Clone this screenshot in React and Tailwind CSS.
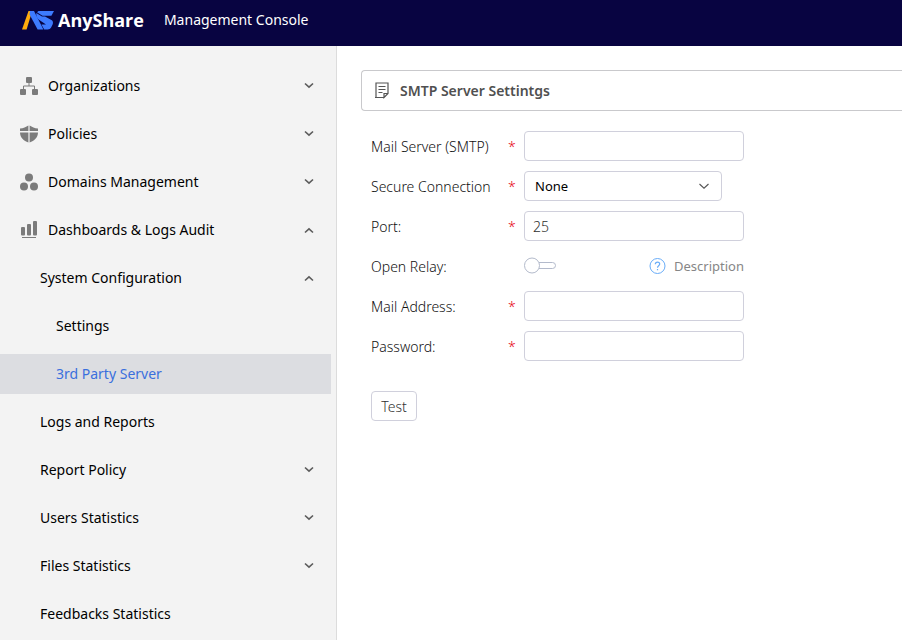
import { useState } from "react";

const menu = [
    { label: "Organizations", icon: OrgIcon, level: 0, arrow: "down" },
    { label: "Policies", icon: ShieldIcon, level: 0, arrow: "down" },
    { label: "Domains Management", icon: DomainsIcon, level: 0, arrow: "down" },
    { label: "Dashboards & Logs Audit", icon: ChartIcon, level: 0, arrow: "up" },
    { label: "System Configuration", level: 1, arrow: "up" },
    { label: "Settings", level: 2 },
    { label: "3rd Party Server", level: 2 },
    { label: "Logs and Reports", level: 1 },
    { label: "Report Policy", level: 1, arrow: "down" },
    { label: "Users Statistics", level: 1, arrow: "down" },
    { label: "Files Statistics", level: 1, arrow: "down" },
    { label: "Feedbacks Statistics", level: 1 },
];

const indent = ["pl-5", "pl-10", "pl-14"];

export default function App() {
    const [active, setActive] = useState("3rd Party Server");

    return (
        <div className="flex h-screen flex-col overflow-hidden bg-white font-['Noto_Sans','Open_Sans',sans-serif] text-sm">
            <header className="flex h-[46px] shrink-0 items-center bg-[#080441] pb-1.5 pl-[22px] text-white">
                <Logo />
                <span className="ml-1 font-['Open_Sans',sans-serif] text-lg font-bold">AnyShare</span>
                <h1 className="ml-5">Management Console</h1>
            </header>

            <div className="flex min-h-0 flex-1">
                <nav className="flex w-[337px] shrink-0 flex-col gap-2 overflow-hidden border-r border-[#dcdcdc] bg-[#f3f3f3] pt-5 pr-[5px]">
                    {menu.map((item) => (
                        <MenuItem
                            key={item.label}
                            item={item}
                            active={item.label === active}
                            onClick={() => setActive(item.label)}
                        />
                    ))}
                </nav>

                <main className="min-w-0 flex-1 overflow-hidden pt-6 pl-6">
                    <div className="flex h-[41px] items-center rounded-l-sm border border-r-0 border-[#c9c9cc] pl-3">
                        <NoteIcon />
                        <h2 className="ml-2.5 font-semibold text-[#505050]">SMTP Server Settintgs</h2>
                    </div>
                    <SmtpForm />
                </main>
            </div>
        </div>
    );
}

function MenuItem({ item, active, onClick }) {
    const Icon = item.icon;
    return (
        <button
            type="button"
            onClick={onClick}
            className={`flex h-10 shrink-0 items-center pr-4 text-left ${indent[item.level]} ${
                active ? "bg-[#dcdde1] text-[#3a6fdd]" : "text-black"
            }`}
        >
            {Icon && (
                <span className="mr-2.5 text-[#7b7b7b]">
                    <Icon />
                </span>
            )}
            <span className="flex-1">{item.label}</span>
            {item.arrow && <Arrow up={item.arrow === "up"} />}
        </button>
    );
}

function SmtpForm() {
    const [relay, setRelay] = useState(false);

    return (
        <form className="px-2.5 pt-5 font-light" onSubmit={(e) => e.preventDefault()}>
            <div className="flex flex-col gap-2.5">
                <Field id="server" label="Mail Server (SMTP)" required>
                    <TextInput id="server" />
                </Field>
                <Field id="secure" label="Secure Connection" required>
                    <div className="relative w-[198px]">
                        <select
                            id="secure"
                            className="block h-[30px] w-full appearance-none rounded border border-[#d0d0dc] bg-white pl-2.5 text-[13px] font-normal text-black outline-none"
                        >
                            <option>None</option>
                            <option>SSL/TLS</option>
                            <option>STARTTLS</option>
                        </select>
                        <svg
                            className="pointer-events-none absolute top-2.5 right-3 h-2.5 w-3"
                            viewBox="0 0 12 10"
                            fill="none"
                            stroke="#555"
                            strokeWidth="1.1"
                        >
                            <path d="M1.5 3 6 7.2 10.5 3" />
                        </svg>
                    </div>
                </Field>
                <Field id="port" label="Port:" required>
                    <TextInput id="port" defaultValue="25" />
                </Field>
                <Field id="relay" label="Open Relay:">
                    <div className="flex w-[220px] items-center justify-between">
                        <label className="cursor-pointer">
                            <input
                                id="relay"
                                type="checkbox"
                                className="sr-only"
                                checked={relay}
                                onChange={(e) => setRelay(e.target.checked)}
                            />
                            <Toggle on={relay} />
                        </label>
                        <a href="#description" className="flex items-center gap-2 text-[13px] font-normal text-[#868686]">
                            <HelpIcon />
                            Description
                        </a>
                    </div>
                </Field>
                <Field id="address" label="Mail Address:" required>
                    <TextInput id="address" />
                </Field>
                <Field id="password" label="Password:" required>
                    <TextInput id="password" type="password" />
                </Field>
            </div>

            <button
                type="button"
                className="mt-[30px] h-[30px] w-[46px] rounded border border-[#d0d0dc] bg-white pt-0.5 text-[#303030]"
            >
                Test
            </button>
        </form>
    );
}

function Field({ id, label, required = false, children }) {
    return (
        <div className="flex h-[30px] items-center text-[#111]">
            <label htmlFor={id} className="w-[137px] pt-0.5 whitespace-nowrap">
                {label}
            </label>
            <span className="w-4 pt-0.5 text-[#e60012]">{required && "*"}</span>
            {children}
        </div>
    );
}

function TextInput({ id, type = "text", defaultValue }) {
    return (
        <input
            id={id}
            type={type}
            defaultValue={defaultValue}
            className="h-[30px] w-[220px] rounded border border-[#d0d0dc] bg-white px-2 text-[#303030] outline-none"
        />
    );
}

function Toggle({ on }) {
    return (
        <svg width="33" height="18" viewBox="0 0 33 18" fill="#fff" stroke="#b3bacb">
            <rect x="8.5" y="5.5" width="23" height="6" rx="3" />
            <circle cx={on ? 24 : 8} cy="8.5" r="7.5" />
        </svg>
    );
}

function Logo() {
    return (
        <svg width="32" height="19" viewBox="0 0 32 19">
            <path d="M6.5 0h3.700L4.600 18.500H0z" fill="#ffab0d" />
            <path d="M8 0h4l9.400 18.500H15.600L7.600 3.500z" fill="#3d7bff" />
            <path d="M16.500 0H32l-2.600 4.800H20.500L15 1.200z" fill="#3d7bff" />
            <path d="M14.300 2 20 5.600h3l6.800 3.600c1.300 1 1.500 2.600.8 4.300l-1.500 3c-.7 1.300-1.800 2-3.400 2h-3.500l-2.800-5h4.600L16.600 8.500c-1.700-1.200-2.600-4.200-2.300-6.500z" fill="#3d7bff" />
        </svg>
    );
}

function OrgIcon() {
    return (
        <svg width="18" height="18" viewBox="0 0 18 18" fill="currentColor">
            <rect x="6" y="0" width="6" height="6" rx="1" />
            <rect x="0" y="12" width="6" height="6" rx="1" />
            <rect x="12" y="12" width="6" height="6" rx="1" />
            <path d="M3.500 12V9h11v3M9 6v3" fill="none" stroke="currentColor" />
        </svg>
    );
}

function ShieldIcon() {
    return (
        <svg width="18" height="18" viewBox="0 0 18 18" fill="currentColor">
            <path d="M8.400.6v5.400H0V3.600C3.400 3.400 6 2.200 8.400.6zM9.600.6C12 2.200 14.600 3.400 18 3.600v2.400H9.600zM0 7.500h8.400v10C3.800 15.800 0 12.500 0 7.500zM9.600 7.500H18c0 5-3.800 8.300-8.400 10z" />
        </svg>
    );
}

function DomainsIcon() {
    return (
        <svg width="18" height="18" viewBox="0 0 18 18" fill="currentColor">
            <circle cx="9" cy="4.500" r="4" />
            <circle cx="4" cy="13.500" r="4" />
            <circle cx="14" cy="13.500" r="4" />
        </svg>
    );
}

function ChartIcon() {
    return (
        <svg width="18" height="18" viewBox="0 0 18 18" fill="currentColor">
            <rect x="1" y="6" width="4" height="8.500" rx="1" />
            <rect x="7" y="3" width="4" height="11.500" rx="1" />
            <rect x="13" y="0" width="4" height="14.500" rx="1" />
            <rect x="2" y="16" width="14" height="1" />
        </svg>
    );
}

function NoteIcon() {
    return (
        <svg width="16" height="17" viewBox="0 0 16 17" fill="none" stroke="#555" strokeWidth="1.2">
            <path d="M9.500 15.500H1M2 15.500V1h12v10.500l-4 4v-4h4" />
            <path d="M4.500 4.500h7M4.500 7.500h7M4.500 10.500h4" />
        </svg>
    );
}

function HelpIcon() {
    return (
        <svg width="17" height="17" viewBox="0 0 17 17" fill="none" stroke="#68acf8">
            <circle cx="8.500" cy="8" r="7.500" />
            <path d="M6.300 6.200c0-1.300.9-2.100 2.200-2.100s2.200.8 2.200 2c0 1.600-2.200 1.700-2.200 3.600M8.500 11v1.200" strokeWidth="1.200" />
        </svg>
    );
}

function Arrow({ up }) {
    return (
        <svg width="12" height="8" viewBox="0 0 12 8" fill="none" stroke="#5c5c5c" strokeWidth="1.600">
            <path d={up ? "M2 6.500 6 2.800l4 3.700" : "M2 1.500 6 5.200l4-3.700"} />
        </svg>
    );
}
